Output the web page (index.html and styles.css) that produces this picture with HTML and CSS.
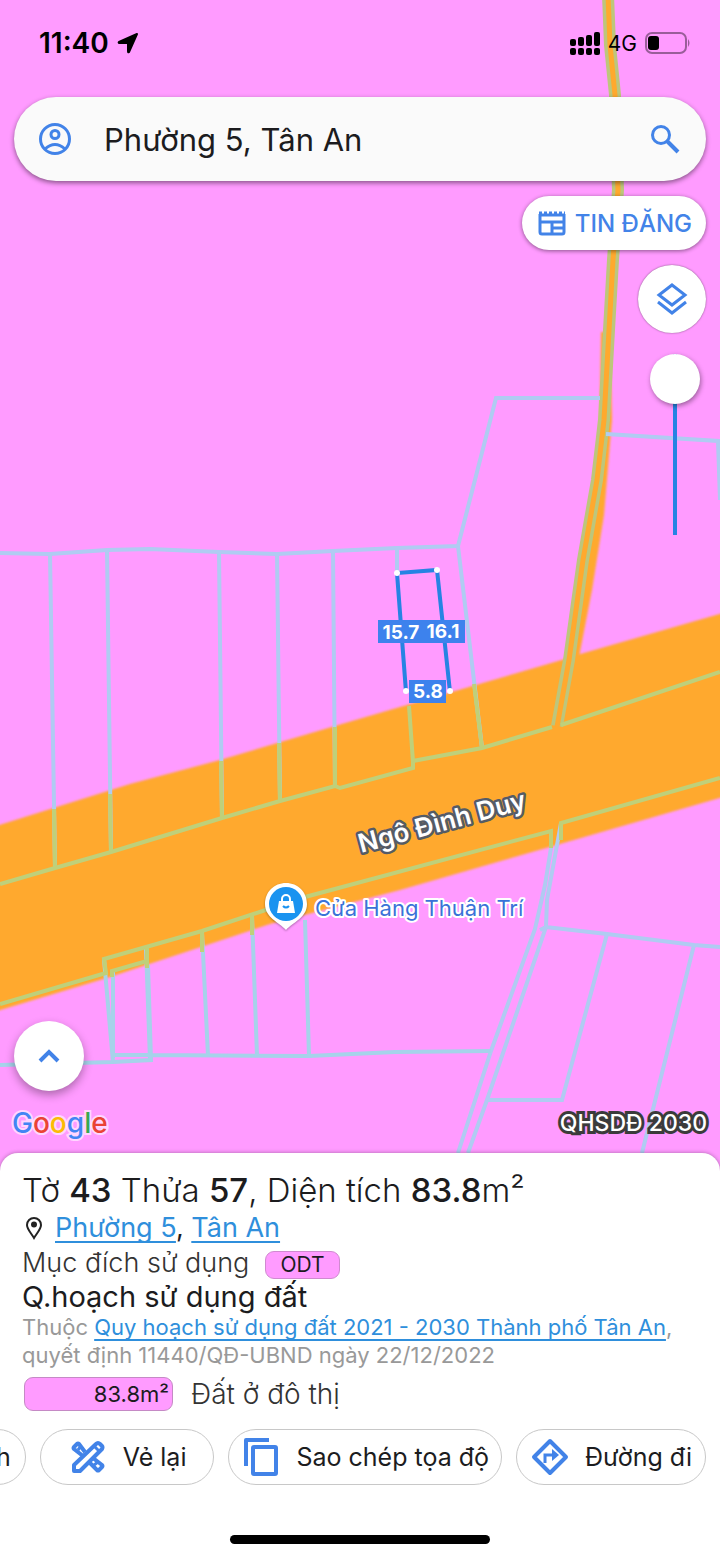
FILE: index.html
```html
<!DOCTYPE html>
<html lang="vi">
<head>
<meta charset="utf-8">
<meta name="viewport" content="width=device-width, initial-scale=1">
<title>Bản đồ quy hoạch</title>
<link rel="stylesheet" href="styles.css">
</head>
<body>
<div class="app">
  <main class="map">
    <svg class="map-canvas" viewBox="0 0 720 1173" preserveAspectRatio="xMidYMin slice" role="img" aria-label="Bản đồ thửa đất">
      <defs>
        <filter id="soft" x="-5%" y="-5%" width="110%" height="110%"><feGaussianBlur stdDeviation="1"/></filter>
      </defs>
      <g filter="url(#soft)" fill="#ffa92e">
        <path d="M-10 828 L130 784 L220 760 L335 726 L400 707 L565 659 L577 655 L730 611 V795 L560 844 L400 890 L270 924 L110 977 L-10 1013Z"/>
        <path d="M601 332H610L612 420L604 515L592 590L579 657L566 662L585 560L599 470Z"/>
      </g>
      <g class="lane">
        <path d="M608 -5L610 45L615 95L618 190L613 260L609 330L604 420L597 480L583 560L569 660L557 726" stroke="#bdc67c" stroke-width="12"/>
        <path d="M608 -5L610 45L615 95L618 190L613 260L609 330L604 420L597 480L583 560L569 660L557 727" stroke="#ffa92e" stroke-width="5"/>
      </g>
      <g class="parcels">
        <path d="M0 553L50 554L107 550L150 549L219 552L277 554L333 551L397 548L458 546L496 398H600"/>
        <path d="M50 554L55 867M107 550L111 851M219 552L222 818M277 554L280 801M333 551L335 788M397 548V572M458 546L482 748M606 434L718 441L720 500"/>
        <path d="M551 832V848L545 885L535 929L491 1051L458 1153M561 823L547 900L546 927L487 1100L468 1153M540 930L546 927L607 934L694 945L720 947M607 934L562 1100H487M694 945L642 1153"/>
      </g>
      <g class="parcels parcels-south">
        <path d="M104 959L113 1062M113 971V1058M146 948L150 1060M202 932L208 1056M252 916L257 1056M305 920L309 1056"/>
        <path d="M0 1065L113 1062L151 1060L148 965M111 1055H150L309 1056L395 1052L491 1051"/>
      </g>
      <g class="parcels parcels-road">
        <path d="M0 884L55 868L111 852L222 818L280 801L335 786L340 788L413 768V761L482 748L552 727M561 725L720 672"/>
        <path d="M54 809L55 867M110 794L111 851M221 761L222 818M279 743L280 801M335 727V788M409 706L413 762M474 684L482 748"/>
        <path d="M0 1004L106 973L104 959L202 931L305 897L551 831V848M561 840V823L720 778M112 977V971L147 961M147 948V968M202 931V952M252 916V935"/>
      </g>
      <g class="selected">
        <path d="M406 692L397 573L437 570L450 692"/>
        <g fill="#fff"><circle cx="397" cy="573" r="3"/><circle cx="437" cy="570" r="3"/><circle cx="406" cy="691" r="3"/><circle cx="450" cy="691" r="3"/></g>
        <path class="tag" d="M378 620H465V643H378ZM409 680H446V703H409Z"/>
        <g class="measure">
          <text x="401" y="639">15.7</text>
          <text x="443" y="638">16.1</text>
          <text x="428" y="698">5.8</text>
        </g>
      </g>
      <text class="street" x="442" y="831" transform="rotate(-15 442 822)">Ngô Đình Duy</text>
      <path class="pin" d="M286 883C274 883 265 892 265 904C265 918 279 922 286 930C293 922 307 918 307 904C307 892 298 883 286 883Z"/>
      <circle cx="286" cy="904" r="17" fill="#1a93f0"/>
      <path d="M279 901H293L295 913H277Z" fill="#fff"/>
      <path d="M282 902V899A4 4 0 0 1 290 899V902" fill="none" stroke="#fff" stroke-width="2"/>
      <path d="M283 906Q286 909 289 906" fill="none" stroke="#1a93f0" stroke-width="2"/>
      <text class="place" x="315" y="916">Cửa Hàng Thuận Trí</text>
    </svg>

    <header class="status">
      <div class="status-group">
        <span class="clock">11:40</span>
        <svg width="22" height="22" viewBox="0 0 22 22" aria-hidden="true"><path d="M20 2L12 20Q11 21 11 19V11H3Q1 11 2 10Z" stroke="#000" stroke-width="2" stroke-linejoin="round"/></svg>
      </div>
      <div class="status-group">
        <svg width="30" height="24" viewBox="0 0 30 24" aria-hidden="true"><rect x="0" y="8" width="6" height="7" rx="2"/><rect x="8" y="6" width="6" height="9" rx="2"/><rect x="16" y="4" width="6" height="11" rx="2"/><rect x="24" y="1" width="6" height="14" rx="2"/><rect x="0" y="17" width="6" height="7" rx="2"/><rect x="8" y="17" width="6" height="7" rx="2"/><rect x="16" y="17" width="6" height="7" rx="2"/><rect x="24" y="17" width="6" height="7" rx="2"/></svg>
        <span class="network">4G</span>
        <svg width="46" height="22" viewBox="0 0 46 22" aria-hidden="true"><rect x="1" y="1" width="40" height="20" rx="6" fill="none" stroke="#000" stroke-opacity=".4" stroke-width="2"/><rect x="3" y="4" width="11" height="14" rx="3"/><path d="M43 7Q46 11 43 15Z" fill-opacity=".4"/></svg>
      </div>
    </header>

    <form class="search">
      <button class="icon-button" type="button" aria-label="Tài khoản">
        <svg width="34" height="34" viewBox="0 0 34 34" fill="none" stroke="#4283e8" stroke-width="3" aria-hidden="true"><circle cx="17" cy="17" r="14.500"/><circle cx="17" cy="12.500" r="4"/><path d="M7 27Q17 18 27 27"/></svg>
      </button>
      <input class="search-input" type="text" value="Phường 5, Tân An" aria-label="Tìm kiếm">
      <button class="icon-button" type="submit" aria-label="Tìm">
        <svg width="30" height="30" viewBox="0 0 30 30" fill="none" stroke="#4283e8" stroke-width="3" aria-hidden="true"><circle cx="11" cy="11" r="8.500"/><path d="M17 17L28 28" stroke-width="4"/></svg>
      </button>
    </form>

    <div class="tools">
      <button class="post-button" type="button">
        <svg width="28" height="26" viewBox="0 0 28 26" fill="none" stroke="#4283e8" stroke-width="3" aria-hidden="true"><path d="M2 4V22Q2 24 4 24H24Q26 24 26 22V4M2 12H26M14 12V24M14 18H26"/><path d="M1 5H27"/><path d="M1 3H27" stroke-dasharray="3 2"/></svg>
        TIN ĐĂNG
      </button>
      <button class="round-button" type="button" aria-label="Lớp bản đồ">
        <svg width="34" height="36" viewBox="0 0 34 36" fill="none" stroke="#4283e8" stroke-width="3" aria-hidden="true"><path d="M17 4L30 14L17 24L4 14ZM3 21L17 32L31 21"/></svg>
      </button>
      <input class="opacity-slider" type="range" min="0" max="100" value="100" aria-label="Độ mờ lớp quy hoạch">
    </div>

    <div class="map-bottom">
      <button class="round-button expand" type="button" aria-label="Mở rộng">
        <svg width="22" height="14" viewBox="0 0 22 14" fill="none" stroke="#4283e8" stroke-width="4" aria-hidden="true"><path d="M2 12L11 3L20 12"/></svg>
      </button>
      <div class="credits">
        <span class="google"><span class="g-blue">G</span><span class="g-red">o</span><span class="g-yellow">o</span><span class="g-blue">g</span><span class="g-green">l</span><span class="g-red">e</span></span>
        <span class="plan">QHSDĐ 2030</span>
      </div>
    </div>
  </main>

  <section class="sheet">
    <div class="details">
      <h1 class="title">Tờ <b>43</b> Thửa <b>57</b>, Diện tích <b>83.8</b>m²</h1>
      <p class="address">
        <svg width="18" height="24" viewBox="0 0 18 24" fill="none" stroke="#222" stroke-width="2" aria-hidden="true"><path d="M9 22C6 17 2 13 2 9A7 7 0 0 1 16 9C16 13 12 17 9 22Z"/><circle cx="9" cy="8.500" r="2" fill="#222"/></svg>
        <span><a href="#phuong-5">Phường 5</a>, <a href="#tan-an">Tân An</a></span>
      </p>
      <p class="purpose">Mục đích sử dụng <span class="badge">ODT</span></p>
      <h2 class="subtitle">Q.hoạch sử dụng đất</h2>
      <p class="source">Thuộc <a href="#quy-hoach">Quy hoạch sử dụng đất 2021 - 2030 Thành phố Tân An</a>, quyết định 11440/QĐ-UBND ngày 22/12/2022</p>
      <p class="land"><span class="area">83.8m²</span> Đất ở đô thị</p>
    </div>
    <div class="actions">
      <button class="chip" type="button">Ảnh</button>
      <button class="chip chip-redraw" type="button">
        <svg width="34" height="34" viewBox="0 0 34 34" fill="none" stroke="#4283e8" stroke-width="4" stroke-linejoin="round" aria-hidden="true"><path d="M14 12L8 4Q7 3 6 4L3 7Q2 8 3 9L12 16M18 22L26 30Q27 31 28 30L31 27Q32 26 31 25L22 18"/><path d="M10 6L7 10M23 25L27 22M24 7L28 11" stroke-width="3"/><path d="M3 31V25L25 4Q27 2 29 4L31 6Q32 7 31 9L9 31Z"/></svg>
        Vẻ lại
      </button>
      <button class="chip chip-copy" type="button">
        <svg width="34" height="38" viewBox="0 0 34 38" fill="none" stroke="#4283e8" stroke-width="4" stroke-linejoin="round" aria-hidden="true"><path d="M2 28V2H25"/><rect x="9" y="9" width="23" height="27" rx="1"/></svg>
        Sao chép tọa độ
      </button>
      <button class="chip chip-route" type="button">
        <svg width="38" height="38" viewBox="0 0 38 38" fill="none" stroke="#4283e8" stroke-width="4" stroke-linejoin="round" aria-hidden="true"><path d="M19 3L35 19L19 35L3 19Z"/><path d="M14 25V17H22" stroke-width="3" stroke-linejoin="miter"/><path d="M21 11L28 17L21 23Z" fill="#4283e8" stroke="none"/></svg>
        Đường đi
      </button>
    </div>
    <div class="home-indicator"></div>
  </section>
</div>
</body>
</html>
```
FILE: styles.css
```css
* { box-sizing: border-box; }

body {
  margin: 0;
  font-family: Inter, "Noto Sans", sans-serif;
  color: #1c1c1e;
}

button, input { font: inherit; color: inherit; }
button { border: 0; cursor: pointer; }
h1, h2, p { margin: 0; font-weight: 400; }

.app {
  display: flex;
  flex-direction: column;
  min-height: 100vh;
  overflow: hidden;
  background: #ff9bff;
}

/* Map */
.map {
  position: relative;
  flex: 1;
  display: flex;
  flex-direction: column;
}

.map-canvas {
  position: absolute;
  top: 0;
  left: 0;
  width: 100%;
  height: calc(100% + 20px);
}

.lane path { fill: none; }
.parcels { fill: none; stroke: #b0cbf2; stroke-width: 4; }
.parcels-south { stroke: #a6d2ea; }
.parcels-road { stroke: #bfd07a; }
.selected { fill: none; stroke: #2683e3; stroke-width: 4; }
.selected circle { stroke: none; }
.tag { fill: #3d82ed; stroke: none; }
.measure {
  fill: #fff;
  stroke: none;
  font-size: 19px;
  font-weight: 700;
  text-anchor: middle;
}
.street {
  fill: #fff;
  stroke: #555b66;
  stroke-width: 5;
  stroke-linejoin: round;
  paint-order: stroke;
  font-size: 26px;
  font-weight: 600;
  text-anchor: middle;
}
.pin { fill: #fff; filter: drop-shadow(0 1px 1px #0005); }
.place {
  fill: #3a72d8;
  stroke: #fff;
  stroke-width: 4;
  stroke-linejoin: round;
  paint-order: stroke;
  font-size: 22px;
}

.status, .search, .tools, .map-bottom { position: relative; }

.status {
  display: flex;
  justify-content: space-between;
  padding: 27px 29px 0 39px;
  height: 97px;
  color: #000;
}
.status-group { display: flex; align-items: center; gap: 8px; height: 32px; }
.clock { font-size: 28px; font-weight: 600; }
.network { font-size: 21px; }

.search {
  display: flex;
  align-items: center;
  margin: 0 14px;
  height: 84px;
  padding: 0 26px 0 24px;
  border-radius: 42px;
  background: #fafafa;
  box-shadow: 0 2px 5px #0007;
}
.icon-button { display: flex; padding: 0; background: none; }
.search-input {
  flex: 1;
  min-width: 0;
  margin-left: 32px;
  padding: 0;
  border: 0;
  outline: 0;
  background: none;
  font-size: 31px;
}

.tools {
  display: flex;
  flex-direction: column;
  align-items: flex-end;
  gap: 15px;
  padding: 15px 14px 0;
}
.post-button {
  display: flex;
  align-items: center;
  gap: 9px;
  height: 54px;
  padding: 0 14px 0 16px;
  border-radius: 27px;
  background: #fff;
  color: #4283e8;
  font-size: 24px;
  font-weight: 500;
  box-shadow: 0 1px 4px #0007;
}
.round-button {
  display: flex;
  align-items: center;
  justify-content: center;
  width: 68px;
  height: 68px;
  padding: 0;
  border-radius: 50%;
  background: #fff;
  box-shadow: 0 0 2px #0008;
}
.opacity-slider {
  appearance: none;
  writing-mode: vertical-lr;
  direction: rtl;
  width: 50px;
  height: 181px;
  margin: 6px 6px 0 0;
  background: linear-gradient(#2683e3, #2683e3) center / 4px 100% no-repeat;
}
.opacity-slider::-webkit-slider-thumb {
  appearance: none;
  width: 50px;
  height: 50px;
  border-radius: 50%;
  background: #fff;
  box-shadow: 1px 2px 5px #0006;
}

.map-bottom { margin-top: auto; padding: 0 13px 10px 12px; }
.expand { width: 70px; height: 70px; margin-left: 2px; box-shadow: 0 4px 10px #0005; }
.credits {
  display: flex;
  justify-content: space-between;
  align-items: center;
  height: 40px;
  margin-top: 12px;
}
.google {
  font-size: 28px;
  font-weight: 500;
  -webkit-text-stroke: 4px #fff9;
  paint-order: stroke;
}
.g-blue { color: #4285f4; }
.g-red { color: #ea4335; }
.g-yellow { color: #fbbc05; }
.g-green { color: #34a853; }
.plan {
  color: #fff;
  font-size: 23px;
  font-weight: 500;
  -webkit-text-stroke: 6px #3b3b3b;
  paint-order: stroke;
}

/* Bottom sheet */
.sheet {
  position: relative;
  padding: 16px 0 14px;
  border-radius: 18px 18px 0 0;
  background: #fff;
  box-shadow: 0 0 4px #0005;
}
.details { padding: 0 22px; }
a {
  color: #2f8fdc;
  text-decoration: underline;
  text-decoration-thickness: 2px;
  text-underline-offset: 4px;
  text-decoration-skip-ink: none;
}
.title { font-size: 33px; font-weight: 300; line-height: 42px; }
.title b { font-weight: 500; }
.address {
  display: flex;
  align-items: center;
  gap: 12px;
  padding-left: 3px;
  font-size: 27px;
  line-height: 34px;
}
.purpose {
  display: flex;
  align-items: center;
  gap: 16px;
  color: #333;
  font-size: 27px;
  font-weight: 300;
  line-height: 36px;
}
.badge {
  margin-top: 4px;
  padding: 0 14px;
  border: 1px solid #d08ad0;
  border-radius: 9px;
  background: #ff9bff;
  color: #1c1c1e;
  font-size: 21px;
  font-weight: 400;
  line-height: 26px;
}
.subtitle { font-size: 29px; line-height: 32px; }
.source { color: #999; font-size: 22px; line-height: 28px; }
.land {
  display: flex;
  align-items: center;
  gap: 18px;
  margin-top: 8px;
  padding-left: 2px;
  color: #333;
  font-size: 28px;
  font-weight: 300;
  line-height: 34px;
}
.area {
  width: 149px;
  padding-right: 3px;
  border: 1px solid #c58ac5;
  border-radius: 9px;
  background: #ff9bff;
  color: #1c1c1e;
  font-size: 22px;
  font-weight: 400;
  line-height: 32px;
  text-align: right;
}

.actions {
  display: flex;
  justify-content: flex-end;
  gap: 14px;
  margin-top: 18px;
  padding-right: 14px;
  overflow: hidden;
}
.chip {
  display: flex;
  flex: none;
  align-items: center;
  height: 56px;
  padding: 0 14px;
  border: 1px solid #c8c8c8;
  border-radius: 28px;
  background: #fff;
  font-size: 25px;
  white-space: nowrap;
}
.chip-redraw { gap: 18px; padding: 0 27px 0 30px; }
.chip-copy { gap: 18px; padding: 0 12px 0 15px; }
.chip-route { gap: 16px; padding-right: 13px; }
.home-indicator {
  width: 36%;
  height: 9px;
  margin: 50px auto 0;
  border-radius: 5px;
  background: #000;
}
```
